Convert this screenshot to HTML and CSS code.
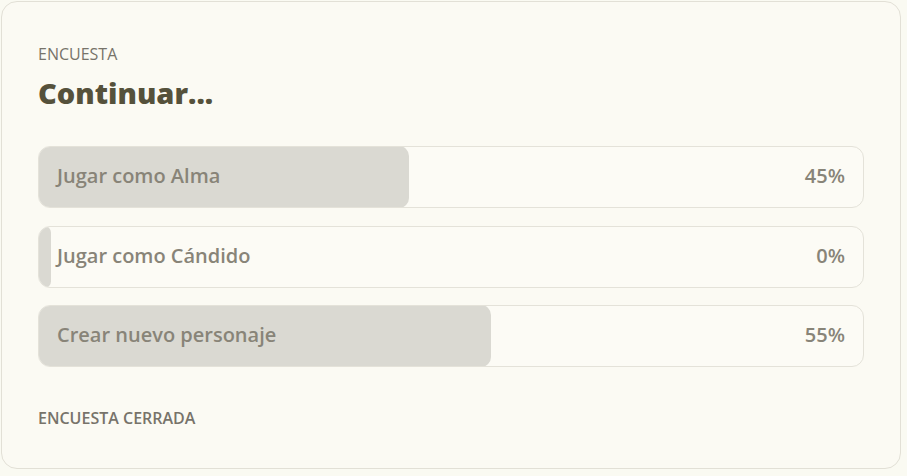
FILE: index.html
```html
<!DOCTYPE html>
<html>
  <head>
    <meta charset="utf-8">
    <meta name="viewport" content="width=device-width,initial-scale=1.0"/>
    <title>Encuesta</title>
    <link rel="stylesheet" href="styles.css">
  </head>

  <body>
    <div class='poll'>
      <div class='poll-kicker'>ENCUESTA</div>
      <h2 class='poll-title'>Continuar...</h2>

      <div class='poll-options'>
        <div class='poll-option'>
          <div class='poll-fill' style='width: 45%;'></div>
          <span class='poll-label'>Jugar como Alma</span>
          <span class='poll-pct'>45%</span>
        </div>
        <div class='poll-option'>
          <div class='poll-fill' style='width: 0%;'></div>
          <span class='poll-label'>Jugar como Cándido</span>
          <span class='poll-pct'>0%</span>
        </div>
        <div class='poll-option'>
          <div class='poll-fill' style='width: 55%;'></div>
          <span class='poll-label'>Crear nuevo personaje</span>
          <span class='poll-pct'>55%</span>
        </div>
      </div>

      <div class='poll-status'>ENCUESTA CERRADA</div>
    </div>
  </body>
</html>
```

FILE: styles.css
```css
* {
  margin: 0;
  padding: 0;
  box-sizing: border-box;
  font-family: 'Open Sans', 'Noto Sans', sans-serif;
}
html, body {
  background-color: #fafaf2;
}
body {
  padding: 1px;
}
.poll {
  width: 900px;
  height: 468px;
  background-color: #fbfaf3;
  border: 1px solid #e2e0d6;
  border-radius: 16px;
  padding: 42px 36px 0 36px;
}
.poll-kicker {
  font-size: 16px;
  line-height: 20px;
  font-weight: 500;
  color: #77736a;
}
.poll-title {
  margin-top: 12px;
  font-size: 29px;
  line-height: 34px;
  font-weight: 800;
  color: #55513b;
}
.poll-options {
  margin-top: 36px;
  display: flex;
  flex-direction: column;
  gap: 17.5px;
}
.poll-option {
  position: relative;
  height: 62px;
  border: 1px solid #e4e2d9;
  border-radius: 12px;
  background-color: #fcfbf5;
  display: flex;
  align-items: center;
  justify-content: space-between;
  padding: 0 18px 3px 18px;
  overflow: hidden;
}
/* result bar, drawn under the label */
.poll-fill {
  position: absolute;
  left: -1px;
  top: -1px;
  bottom: -1px;
  min-width: 13px;
  background-color: #dad9d2;
  border-radius: 10px;
}
.poll-label, .poll-pct {
  position: relative;
  font-size: 20px;
  font-weight: 600;
  color: #888478;
}
.poll-status {
  margin-top: 41px;
  font-size: 16px;
  line-height: 20px;
  font-weight: 600;
  color: #77736a;
}
```
